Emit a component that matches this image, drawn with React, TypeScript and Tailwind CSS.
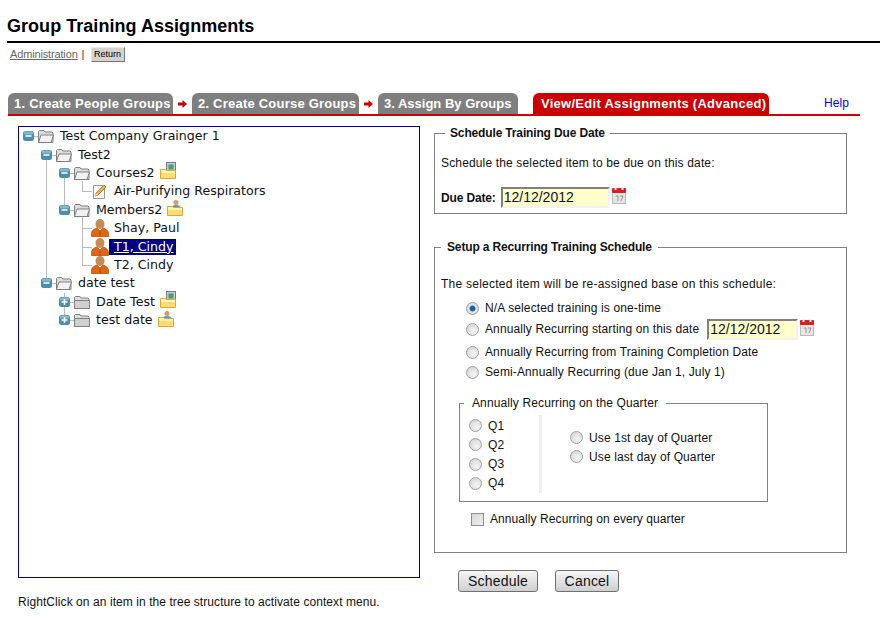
import {FC, ReactNode} from 'react';

const sans = "font-['Liberation_Sans',Arial,sans-serif]";

const Expander: FC<{cx: number; open: boolean}> = ({cx, open}) => (
  <g>
    <rect fill="#4d8fab" height="10" rx="2.5" width="11" x={cx - 5} y="4" />
    <rect fill="#86b8cc" height="3" rx="1" width="9" x={cx - 4} y="4.5" />
    <path d={`M${cx - 2.5} 9h6`} stroke="#fff" strokeWidth="1.5" />
    {!open && <path d={`M${cx + 0.5} 6v6`} stroke="#fff" strokeWidth="1.5" />}
  </g>
);

const FolderIcon: FC<{open?: boolean}> = ({open}) => (
  <svg className="shrink-0" height="16" viewBox="0 0 16 16" width="16">
    <path d="M0.500 14.500v-11l1-1h4.500l1 1.500h7l1 1v9.500z" fill="#dcdcdc" stroke="#808080" />
    {open ? (
      <path d="M0.500 14.500l2.500-7.500h12.500l-2.500 7.500z" fill="#f2f2f2" stroke="#808080" />
    ) : (
      <path d="M0.500 14.500v-8h15v8z" fill="#d0d0d0" stroke="#808080" />
    )}
  </svg>
);

const BadgeFolder: FC<{kind: 'course' | 'member'}> = ({kind}) => (
  <svg className="ml-[2px] -mt-[3px] shrink-0" height="18" viewBox="0 0 16 18" width="16">
    {kind === 'course' ? (
      <g>
        <rect fill="#b9cbe6" height="10" stroke="#6a7fa5" width="9" x="6.500" y="0.500" />
        <rect fill="#5d9a49" height="5" width="5" x="8.500" y="2.500" />
      </g>
    ) : (
      <g>
        <circle cx="9" cy="3.500" fill="#d89a62" r="2.500" />
        <path d="M4 10c0-3 2-4 5-4s5 1 5 4z" fill="#5a96d8" />
      </g>
    )}
    <path d="M0.500 16.500v-9h5l1 1h9v8z" fill="#fff3b0" stroke="#d9a63a" />
    <path d="M1 16h14v-5h-14z" fill="#fbdd72" />
  </svg>
);

const PersonIcon = () => (
  <svg className="-mx-[1px] shrink-0" height="18" viewBox="0 0 18 18" width="18">
    <ellipse cx="9" cy="5" fill="#c78a55" rx="4.500" ry="5" />
    <path d="M0.500 17.500v-3c0-3 3-5 5.500-5.500l3 3 3-3c2.500 0.500 5.500 2.500 5.500 5.500v3z" fill="#e2660f" stroke="#a84808" strokeWidth="0.700" />
    <path d="M9 12.500v5" stroke="#a84808" />
  </svg>
);

const NoteIcon = () => (
  <svg className="shrink-0" height="18" viewBox="0 0 16 18" width="16">
    <path d="M1.500 3.500h9l2 2v11h-11z" fill="#fff" stroke="#999" />
    <path d="M3 14l1-3 8-8 2 2-8 8z" fill="#eeb04c" stroke="#b06c1c" strokeWidth="0.800" />
    <path d="M3 14l1-3 2 2z" fill="#f4d9a8" />
  </svg>
);

const CalendarIcon = () => (
  <svg className="shrink-0" height="17" viewBox="0 0 14 17" width="14">
    <rect fill="#e4e4e4" height="11" stroke="#bbb" width="13" x="0.500" y="5.500" />
    <rect fill="#d81e1e" height="5" rx="1" width="14" y="1" />
    <rect fill="#f3f3f3" height="3" width="2" x="2.500" />
    <rect fill="#f3f3f3" height="3" width="2" x="9.500" />
    <path d="M4 9h2v5M8 9h3l-2 5" fill="none" stroke="#999" />
  </svg>
);

interface TreeRowProps {
  depth: number;
  label: string;
  icon: ReactNode;
  open?: boolean;
  leaf?: boolean;
  badge?: 'course' | 'member';
  guides?: {x: number; from: number; to: number}[];
  selected?: boolean;
}

const TreeRow: FC<TreeRowProps> = ({depth, label, icon, open = false, leaf = false, badge, guides = [], selected}) => {
  const cx = 9 + depth * 18;
  const gutter = 19 + depth * 18;
  return (
    <div className="flex h-[18.4px] items-center">
      <svg className="shrink-0 overflow-visible" height="18" style={{width: gutter}} viewBox={`0 0 ${gutter} 18`}>
        {guides.map(g => (
          <path d={`M${g.x + 0.5} ${g.from}V${g.to}`} key={g.x} stroke="#bbb" />
        ))}
        <path d={`M${cx} 9.500H${gutter}`} stroke="#bbb" />
        {!leaf && <Expander cx={cx} open={open} />}
      </svg>
      {icon}
      <span
        className={`ml-[1px] whitespace-nowrap pl-[5px] pr-[3px] leading-[16px] ${selected ? 'bg-[#000080] text-white underline' : 'text-[#111]'}`}>
        {label}
      </span>
      {badge && <BadgeFolder kind={badge} />}
    </div>
  );
};

const Tree = () => (
  <div className="h-[452px] w-[402px] border border-[#000080] font-['DejaVu_Sans',Verdana,sans-serif] text-[12.600px] tracking-normal">
    <TreeRow depth={0} icon={<FolderIcon open />} label="Test Company Grainger 1" open />
    <TreeRow depth={1} guides={[{x: 27, from: 9, to: 20}]} icon={<FolderIcon open />} label="Test2" open />
    <TreeRow
      badge="course"
      depth={2}
      guides={[
        {x: 27, from: -1, to: 20},
        {x: 45, from: 9, to: 20},
      ]}
      icon={<FolderIcon open />}
      label="Courses2"
      open
    />
    <TreeRow
      depth={3}
      guides={[
        {x: 27, from: -1, to: 20},
        {x: 45, from: -1, to: 20},
        {x: 63, from: -1, to: 9},
      ]}
      icon={<NoteIcon />}
      label="Air-Purifying Respirators"
      leaf
    />
    <TreeRow
      badge="member"
      depth={2}
      guides={[
        {x: 27, from: -1, to: 20},
        {x: 45, from: -1, to: 9},
        {x: 63, from: 9, to: 20},
      ]}
      icon={<FolderIcon open />}
      label="Members2"
      open
    />
    <TreeRow
      depth={3}
      guides={[
        {x: 27, from: -1, to: 20},
        {x: 63, from: -1, to: 20},
      ]}
      icon={<PersonIcon />}
      label="Shay, Paul"
      leaf
    />
    <TreeRow
      depth={3}
      guides={[
        {x: 27, from: -1, to: 20},
        {x: 63, from: -1, to: 20},
      ]}
      icon={<PersonIcon />}
      label="T1, Cindy"
      leaf
      selected
    />
    <TreeRow
      depth={3}
      guides={[
        {x: 27, from: -1, to: 20},
        {x: 63, from: -1, to: 9},
      ]}
      icon={<PersonIcon />}
      label="T2, Cindy"
      leaf
    />
    <TreeRow depth={1} guides={[{x: 27, from: -1, to: 9}]} icon={<FolderIcon open />} label="date test" open />
    <TreeRow depth={2} guides={[{x: 45, from: 0, to: 20}]} badge="course" icon={<FolderIcon />} label="Date Test" />
    <TreeRow depth={2} guides={[{x: 45, from: -1, to: 9}]} badge="member" icon={<FolderIcon />} label="test date" />
  </div>
);

const Tab: FC<{label: string; active?: boolean; className?: string}> = ({label, active, className = ''}) => (
  <div
    className={`flex h-[21px] items-center whitespace-nowrap rounded-t-[6px] text-[13px] font-bold text-white ${active ? 'bg-[#cc0000]' : 'bg-[#7f7f7f]'} ${className}`}>
    {label}
  </div>
);

const TabArrow = () => (
  <svg className="mx-[5px] mb-[6px] shrink-0" height="8" viewBox="0 0 9 8" width="9">
    <path d="M0 2.500h4.500V0L9 4 4.500 8V5.500H0z" fill="#cc0000" />
  </svg>
);

const DateField: FC<{className: string}> = ({className}) => (
  <div className="flex items-start gap-[2px]">
    <input
      className={`h-[21px] border-2 border-[#808080] border-b-[#f2f2f2] border-r-[#f2f2f2] bg-[#ffffcc] pl-[1px] text-[14px] tracking-normal text-[#111] outline-none ${className}`}
      defaultValue="12/12/2012"
      readOnly
    />
    <CalendarIcon />
  </div>
);

const Radio: FC<{name: string; checked?: boolean}> = ({name, checked}) => (
  <input
    className="size-[13px] shrink-0 appearance-none rounded-full border border-[#a0a0a0] bg-[radial-gradient(circle_at_60%_65%,#f5f5f5,#cfcfcf)] checked:bg-[radial-gradient(circle,#1c5f9e_0,#1c5f9e_30%,#e4e8ee_45%,#c8ccd2_100%)]"
    defaultChecked={checked}
    name={name}
    type="radio"
  />
);

const RadioRow: FC<{name: string; label: string; checked?: boolean; className?: string; children?: ReactNode}> = ({
  name,
  label,
  checked,
  className = '',
  children,
}) => (
  <label className={`flex items-center ${className}`}>
    <Radio checked={checked} name={name} />
    <span className="ml-[6px] whitespace-nowrap">{label}</span>
    {children}
  </label>
);

const Button: FC<{label: string; className: string}> = ({label, className}) => (
  <button
    className={`h-[22px] rounded-[3px] border border-[#707070] bg-gradient-to-b from-[#f6f6f6] to-[#cfcfcf] text-[14px] tracking-[0.2px] text-[#111] ${className}`}
    type="button">
    {label}
  </button>
);

const App = () => (
  <div className={`h-[644px] w-[888px] overflow-hidden bg-white text-[12px] tracking-[0.12px] text-[#111] ${sans}`}>
    <div className="ml-[7px] w-[873px] border-b-2 border-black pt-[16px] pb-[4px]">
      <h1 className="text-[18px] font-bold leading-[21px] tracking-[0.04px] text-black">Group Training Assignments</h1>
    </div>
    <div className="ml-[10px] mt-[4px] flex h-[15px] items-center">
      <a className="text-[11px] tracking-[-0.15px] text-[#666] underline" href="#">
        Administration
      </a>
      <span className="ml-[4px] text-[11px] text-[#333]">|</span>
      <button
        className="ml-[6px] h-[15px] w-[34px] border border-[#e8e8e8] border-b-[#777] border-r-[#777] bg-[#d6d3ce] text-[9px] tracking-normal text-black"
        type="button">
        Return
      </button>
    </div>
    <div className="ml-[8px] mt-[31px] flex w-[852px] items-end border-b-2 border-[#cc0000]">
      <Tab className="w-[165px] pl-[6px] tracking-[0.25px]" label="1. Create People Groups" />
      <TabArrow />
      <Tab className="w-[167px] pl-[6px] tracking-[0.22px]" label="2. Create Course Groups" />
      <TabArrow />
      <Tab className="w-[140px] pl-[6px] tracking-[0px]" label="3. Assign By Groups" />
      <Tab active className="ml-[15px] w-[236px] pl-[8px] tracking-[0.27px]" label="View/Edit Assignments (Advanced)" />
      <a className="ml-[55px] mb-[2px] text-[12px] text-[#0000ee]" href="#">
        Help
      </a>
    </div>
    <div className="ml-[18px] mt-[10px] flex items-start gap-[14px]">
      <div>
        <Tree />
        <p className="mt-[17px] leading-[14px] tracking-[0.07px]">
          RightClick on an item in the tree structure to activate context menu.
        </p>
      </div>
      <div className="-mt-[1px] w-[413px]">
        <fieldset className="h-[89px] border border-[#808080] pl-[6px]">
          <legend className="ml-[4px] px-[5px] font-bold leading-[16px] tracking-[-0.15px]">
            Schedule Training Due Date
          </legend>
          <p className="mt-[15px] leading-[14px] tracking-[0.15px]">Schedule the selected item to be due on this date:</p>
          <div className="mt-[17px] flex items-center gap-[5px]">
            <span className="font-bold tracking-[-0.15px]">Due Date:</span>
            <DateField className="w-[109px]" />
          </div>
        </fieldset>
        <fieldset className="mt-[25px] h-[314px] border border-[#808080] pl-[6px]">
          <legend className="ml-[0px] px-[6px] font-bold leading-[16px] tracking-[-0.15px]">
            Setup a Recurring Training Schedule
          </legend>
          <p className="mt-[22px] leading-[14px] tracking-[0.25px]">
            The selected item will be re-assigned base on this schedule:
          </p>
          <div className="ml-[25px] mt-[7px] flex flex-col">
            <RadioRow checked className="h-[20px]" label="N/A selected training is one-time" name="recur" />
            <RadioRow className="h-[22px]" label="Annually Recurring starting on this date" name="recur">
              <span className="ml-[8px]">
                <DateField className="w-[91px]" />
              </span>
            </RadioRow>
            <RadioRow className="h-[24px]" label="Annually Recurring from Training Completion Date" name="recur" />
            <RadioRow className="h-[16px]" label="Semi-Annually Recurring (due Jan 1, July 1)" name="recur" />
          </div>
          <fieldset className="ml-[18px] mt-[15px] h-[107px] w-[309px] border border-[#808080]">
            <legend className="ml-[4px] px-[8px] leading-[16px]">Annually Recurring on the Quarter</legend>
            <div className="flex">
              <div className="mt-[4px] flex h-[78px] w-[82px] flex-col border-r-[3px] border-[#eeeeee] pl-[9px] pt-[1px]">
                {['Q1', 'Q2', 'Q3', 'Q4'].map(q => (
                  <RadioRow className="h-[19.300px]" key={q} label={q} name="quarter" />
                ))}
              </div>
              <div className="ml-[28px] mt-[17px] flex flex-col">
                <RadioRow className="h-[19px]" label="Use 1st day of Quarter" name="day" />
                <RadioRow className="h-[19px]" label="Use last day of Quarter" name="day" />
              </div>
            </div>
          </fieldset>
          <label className="ml-[30px] mt-[8px] flex items-center">
            <input
              className="size-[13px] appearance-none border border-[#8e8e8e] bg-gradient-to-br from-[#d8d8d8] to-[#f0f0f0]"
              type="checkbox"
            />
            <span className="ml-[6px] tracking-[0.08px]">Annually Recurring on every quarter</span>
          </label>
        </fieldset>
        <div className="ml-[24px] mt-[17px] flex gap-[17px]">
          <Button className="w-[80px]" label="Schedule" />
          <Button className="w-[64px]" label="Cancel" />
        </div>
      </div>
    </div>
  </div>
);

export default App;
